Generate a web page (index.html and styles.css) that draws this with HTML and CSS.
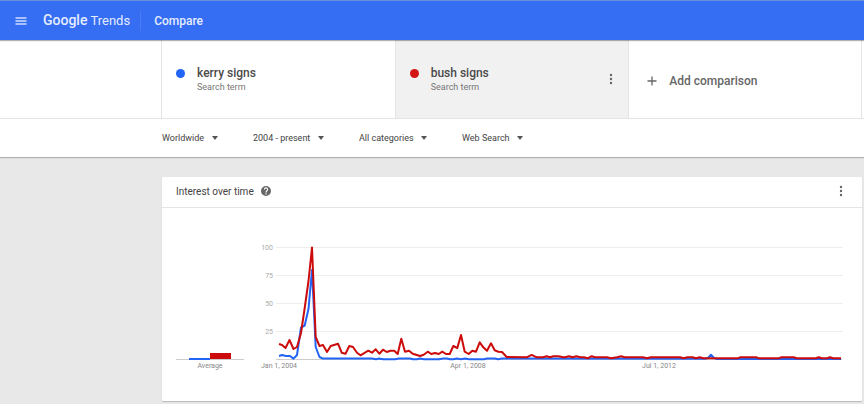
FILE: index.html
```html
<!DOCTYPE html>
<html lang="en">
<head>
<meta charset="utf-8">
<meta name="viewport" content="width=device-width, initial-scale=1">
<title>Google Trends - Compare</title>
<link rel="stylesheet" href="styles.css">
</head>
<body>
<header class="topbar">
  <button class="icon-button menu" type="button" aria-label="Main menu">
    <svg width="12" height="10" viewBox="0 0 12 10"><path d="M.5 2h11M.5 5h11M.5 8h11" stroke="currentColor" stroke-width="2"/></svg>
  </button>
  <a class="logo" href="#"><span class="logo-google">Google</span><span class="logo-trends">Trends</span></a>
  <h1 class="page-title">Compare</h1>
</header>

<section class="terms">
  <div class="term">
    <span class="dot dot-blue"></span>
    <div class="term-text">
      <h2 class="term-name">kerry signs</h2>
      <p class="term-kind">Search term</p>
    </div>
  </div>
  <div class="term term-active">
    <span class="dot dot-red"></span>
    <div class="term-text">
      <h2 class="term-name">bush signs</h2>
      <p class="term-kind">Search term</p>
    </div>
    <button class="icon-button" type="button" aria-label="Term options">
      <svg width="4" height="12" viewBox="0 0 4 12" fill="currentColor"><circle cx="2" cy="2" r="1.2"/><circle cx="2" cy="6" r="1.2"/><circle cx="2" cy="10" r="1.2"/></svg>
    </button>
  </div>
  <button class="term add" type="button">
    <svg width="10" height="10" viewBox="0 0 10 10"><path d="M5 .5v9M.5 5h9" stroke="currentColor" stroke-width="1.3"/></svg>
    <span>Add comparison</span>
  </button>
</section>

<nav class="filters" aria-label="Filters">
  <div class="filter"><select class="filter-select" aria-label="Region"><option>Worldwide</option></select></div>
  <div class="filter"><select class="filter-select" aria-label="Time range"><option>2004 - present</option></select></div>
  <div class="filter"><select class="filter-select" aria-label="Category"><option>All categories</option></select></div>
  <div class="filter"><select class="filter-select" aria-label="Search type"><option>Web Search</option></select></div>
</nav>

<main class="content">
  <section class="card">
    <header class="card-head">
      <h2 class="card-title">Interest over time</h2>
      <button class="icon-button help" type="button" aria-label="Help">
        <svg width="10" height="10" viewBox="0 0 24 24"><path fill="currentColor" d="M12 0a12 12 0 1 0 0 24 12 12 0 0 0 0-24zm1.400 20.400h-2.800v-2.800h2.800zm2.900-9.300-1.100 1.100c-1.100 1.100-1.600 1.800-1.600 3.600h-3v-.7c0-1.400.6-2.600 1.600-3.600l1.500-1.500a2.400 2.400 0 1 0-4.100-1.700H6.800a5.200 5.200 0 1 1 10.400 0c0 1.100-.3 2.100-.9 2.800z"/></svg>
      </button>
      <button class="icon-button" type="button" aria-label="Chart options">
        <svg width="4" height="12" viewBox="0 0 4 12" fill="currentColor"><circle cx="2" cy="2" r="1.2"/><circle cx="2" cy="6" r="1.2"/><circle cx="2" cy="10" r="1.2"/></svg>
      </button>
    </header>
    <svg class="chart" viewBox="162 208 700 193" role="img" aria-label="Interest over time for kerry signs and bush signs">
      <path class="grid" d="M276 247.500H843M276 275.500H843M276 303.500H843M276 331.500H843"/>
      <path class="axis" d="M176 359.500H244M276 359.500H842"/>
      <rect class="bar-blue" x="189" y="358" width="21" height="2"/>
      <rect class="bar-red" x="210" y="353" width="21" height="6"/>
      <polyline class="line line-blue" points="279,356 282,355 286,356 290,356 293.500,358.600 297,355 301,327.500 304.700,325.500 308.500,309 312,270 315.700,347 319.500,357 323,358.600 372,358.600 376,359.200 379,358.600 383,359.200 395,359.200 399,358.600 410,358.600 413,359.200 417,359.200 420,358.600 424,359.200 439,359.200 443,358.600 447,358.600 450,359.200 453,359.200 457,358.600 461,359.200 465,358.600 469,359.200 484,359.200 487,358.600 495,358.600 498,359.200 502,358.600 705,358.800 708,358 711,354.800 714,358 717,359 841,359"/>
      <polyline class="line line-red" points="279,344 282,345 285.500,348 289.500,340 293.500,349 297,347 301,333 304.700,308 308.500,281 312,247.500 315.700,337 319.500,346 323,345 327,352 330.700,346 334,345 338,343.700 341.700,352.700 345.500,353.700 349.300,346 353,347 357,352.700 360.500,355.300 368.300,350.700 372,352.700 375.700,349.300 379.300,353.700 383,349.700 386.700,352 390.500,350.700 394.300,350.700 397.700,354 401.300,338.700 405,351.700 409,350.700 412.700,353.700 420,356 423.700,354.700 427.700,351.700 431.300,354 435,353 438.700,354 442.300,351.700 446,354 449.700,354 453.300,346 457.300,348 461,335 464.700,351.700 468.700,354 472.300,350.700 476,351.700 479.700,342.300 483.300,347.300 487,350.700 491,343.300 494.700,350.300 498.300,351.700 502,352 506.700,357 526.700,357.300 531.700,354.900 536.700,357.300 543,357.300 546.700,356.200 550,357.300 553.300,356.200 558.300,356.200 563.300,357.300 565,357.300 569,356.200 572.700,357.300 576.300,356.200 580.300,357.300 584,357.300 587.700,358.300 591.700,356.200 595,357.300 607,357.300 611,358.300 617,357.300 621,356.200 624.700,357.300 643,357.300 647,358.300 650.700,357.300 680,357.300 683.700,358.300 687.300,357.300 692.700,357.300 696,358.300 699.700,357.300 703.300,358.300 737.700,358.300 740,357.300 756.700,357.300 759,358.300 778.700,358.300 781,357.300 793.700,357.300 796.700,358.300 815.700,358.300 818.700,357.300 821.700,358.300 827,358.300 830,357.300 833,358.300 841,358.300"/>
      <g class="label label-end">
        <text x="273" y="250">100</text>
        <text x="273" y="278">75</text>
        <text x="273" y="306">50</text>
        <text x="273" y="334">25</text>
      </g>
      <g class="label">
        <text x="210" y="368">Average</text>
        <text x="279" y="368">Jan 1, 2004</text>
        <text x="468" y="368">Apr 1, 2008</text>
        <text x="659" y="368">Jul 1, 2012</text>
      </g>
    </svg>
  </section>
</main>
</body>
</html>
```
FILE: styles.css
```css
* {
  box-sizing: border-box;
}

body {
  margin: 0;
  background: #e8e8e8;
  color: #444;
  font-family: Roboto, "Liberation Sans", sans-serif;
  font-size: 9px;
}

h1, h2, p {
  margin: 0;
}

button {
  border: 0;
  background: none;
  padding: 0;
  font: inherit;
  color: inherit;
  cursor: pointer;
}

svg {
  display: block;
}

.icon-button {
  display: flex;
  flex: none;
  color: #666;
}

.topbar {
  position: relative;
  display: flex;
  align-items: center;
  height: 40px;
  padding-left: 15px;
  background: #356df3;
  border-top: 1px solid #6a8fdc;
  box-shadow: 0 1px 1px rgba(0, 0, 0, 0.3);
  color: #e4ecff;
}

.menu {
  color: #a9c1fb;
}

.logo {
  display: flex;
  align-items: baseline;
  gap: 3px;
  margin-left: 16px;
  padding-bottom: 1px;
  color: inherit;
  font-size: 13px;
  line-height: 28px;
  text-decoration: none;
}

.logo-google {
  font-size: 14px;
  font-weight: 500;
}

.page-title {
  margin-left: 10px;
  padding-left: 13px;
  border-left: 1px solid #4a7cf2;
  font-size: 12px;
  font-weight: 500;
  line-height: 20px;
}

.terms {
  display: grid;
  grid-template-columns: repeat(3, 1fr);
  height: 79px;
  padding: 0 2px 0 161px;
  background: #fff;
  border-bottom: 1px solid #e4e4e4;
}

.term {
  display: flex;
  align-items: center;
  padding: 0 15px 0 14px;
  border-left: 1px solid #e4e4e4;
  text-align: left;
}

.term-active {
  background: #f1f1f1;
}

.dot {
  flex: none;
  width: 9px;
  height: 9px;
  margin-bottom: 12px;
  border-radius: 50%;
}

.dot-blue {
  background: #2264f5;
}

.dot-red {
  background: #d31516;
}

.term-text {
  flex: 1;
  margin-left: 12px;
}

.term-name {
  font-size: 12px;
  font-weight: 500;
  line-height: 16px;
  color: #4a4a4a;
}

.term-kind {
  line-height: 12px;
  color: #777;
}

.add {
  gap: 12px;
  padding-top: 4px;
  padding-left: 18px;
  border-right: 1px solid #e4e4e4;
  color: #666;
  font-size: 12px;
  font-weight: 500;
}

.filters {
  display: flex;
  align-items: center;
  gap: 35px;
  height: 38px;
  padding-left: 162px;
  background: #fff;
  box-shadow: 0 1px 1px rgba(0, 0, 0, 0.25);
}

.filter {
  display: flex;
  align-items: center;
  position: relative;
}

.filter::after {
  content: "";
  margin-left: -7px;
  border: 3px solid transparent;
  border-top: 4px solid #555;
  border-bottom: 0;
  pointer-events: none;
}

.filter-select {
  appearance: none;
  padding: 0 14px 0 0;
  border: 0;
  background: none;
  color: #444;
  font: inherit;
  line-height: 16px;
}

.content {
  padding: 20px 2px 2px 162px;
}

.card {
  background: #fff;
  border-radius: 1px;
  box-shadow: 0 1px 1px rgba(0, 0, 0, 0.2);
}

.card-head {
  display: flex;
  align-items: center;
  height: 31px;
  padding: 0 19px 2px 14px;
  border-bottom: 1px solid #e4e4e4;
}

.card-title {
  font-size: 10px;
  font-weight: 400;
}

.help {
  margin: 0 auto 0 7px;
}

.chart {
  width: 100%;
  height: auto;
}

.grid {
  stroke: #eee;
}

.axis {
  stroke: #ccc;
}

.bar-blue {
  fill: #2264f5;
}

.bar-red {
  fill: #cc0c0c;
}

.line {
  fill: none;
  stroke-width: 2;
  stroke-linejoin: round;
}

.line-blue {
  stroke: #2264f5;
}

.line-red {
  stroke: #cc0c0c;
}

.label {
  fill: #888;
  font-size: 7px;
  text-anchor: middle;
}

.label-end {
  fill: #aaa;
  text-anchor: end;
}
```
